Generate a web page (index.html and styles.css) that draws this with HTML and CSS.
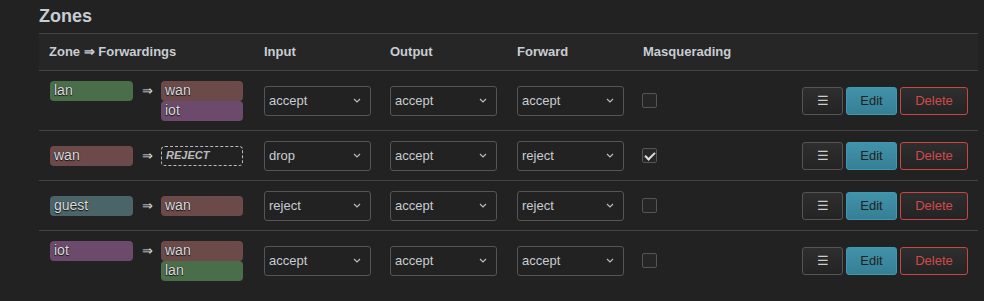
FILE: index.html
```html
<!DOCTYPE html>
<html lang="en">
<head>
  <meta charset="UTF-8">
  <meta name="viewport" content="width=device-width, initial-scale=1.0">
  <title>Firewall - Zones</title>
  <link rel="stylesheet" href="styles.css">
</head>
<body>

  <div class="section">
    <h3>Zones</h3>

    <table class="zones">
      <colgroup>
        <col class="c-zone">
        <col class="c-policy">
        <col class="c-policy2">
        <col class="c-policy">
        <col>
        <col class="c-actions">
      </colgroup>
      <thead>
        <tr>
          <th>Zone &rArr; Forwardings</th>
          <th>Input</th>
          <th>Output</th>
          <th>Forward</th>
          <th>Masquerading</th>
          <th></th>
        </tr>
      </thead>
      <tbody>
        <!-- lan -->
        <tr>
          <td>
            <div class="fwd">
              <span class="zone lan">lan</span>
              <span class="arrow">&rArr;</span>
              <div class="dest">
                <span class="zone wan">wan</span>
                <span class="zone iot">iot</span>
              </div>
            </div>
          </td>
          <td><select><option>accept</option><option>reject</option><option>drop</option></select></td>
          <td><select><option>accept</option><option>reject</option><option>drop</option></select></td>
          <td><select><option>accept</option><option>reject</option><option>drop</option></select></td>
          <td><input type="checkbox"></td>
          <td class="actions">
            <button class="btn">&#9776;</button><button class="btn edit">Edit</button><button class="btn remove">Delete</button>
          </td>
        </tr>

        <!-- wan -->
        <tr>
          <td>
            <div class="fwd">
              <span class="zone wan">wan</span>
              <span class="arrow">&rArr;</span>
              <div class="dest">
                <span class="zone reject">REJECT</span>
              </div>
            </div>
          </td>
          <td><select><option>drop</option><option>accept</option><option>reject</option></select></td>
          <td><select><option>accept</option><option>reject</option><option>drop</option></select></td>
          <td><select><option>reject</option><option>accept</option><option>drop</option></select></td>
          <td><input type="checkbox" checked></td>
          <td class="actions">
            <button class="btn">&#9776;</button><button class="btn edit">Edit</button><button class="btn remove">Delete</button>
          </td>
        </tr>

        <!-- guest -->
        <tr>
          <td>
            <div class="fwd">
              <span class="zone guest">guest</span>
              <span class="arrow">&rArr;</span>
              <div class="dest">
                <span class="zone wan">wan</span>
              </div>
            </div>
          </td>
          <td><select><option>reject</option><option>accept</option><option>drop</option></select></td>
          <td><select><option>accept</option><option>reject</option><option>drop</option></select></td>
          <td><select><option>reject</option><option>accept</option><option>drop</option></select></td>
          <td><input type="checkbox"></td>
          <td class="actions">
            <button class="btn">&#9776;</button><button class="btn edit">Edit</button><button class="btn remove">Delete</button>
          </td>
        </tr>

        <!-- iot -->
        <tr>
          <td>
            <div class="fwd">
              <span class="zone iot">iot</span>
              <span class="arrow">&rArr;</span>
              <div class="dest">
                <span class="zone wan">wan</span>
                <span class="zone lan">lan</span>
              </div>
            </div>
          </td>
          <td><select><option>accept</option><option>reject</option><option>drop</option></select></td>
          <td><select><option>accept</option><option>reject</option><option>drop</option></select></td>
          <td><select><option>accept</option><option>reject</option><option>drop</option></select></td>
          <td><input type="checkbox"></td>
          <td class="actions">
            <button class="btn">&#9776;</button><button class="btn edit">Edit</button><button class="btn remove">Delete</button>
          </td>
        </tr>
      </tbody>
    </table>
  </div>

</body>
</html>
```

FILE: styles.css
```css
body {
  font-family: "Liberation Sans", Arial, sans-serif;
  font-size: 13px;
  margin: 0;
  padding: 0;
  background-color: #222;
  color: #ccc;
}
.section {
  padding: 0 6px 0 39px;
}
h3 {
  margin: 0;
  padding: 6px 0 7px;
  font-size: 18px;
  line-height: 20px;
  color: #c8cdd2;
}
.zones {
  width: 100%;
  border-collapse: collapse;
  table-layout: fixed;
}
.c-zone {
  width: 215px;
}
.c-policy {
  width: 126px;
}
.c-policy2 {
  width: 127px;
}
.c-actions {
  width: 200px;
}
.zones th {
  text-align: left;
  font-weight: bold;
  padding: 10px;
  height: 16px;
  line-height: 16px;
  background-color: #262626;
  border-top: 1px solid #444;
  border-bottom: 1px solid #444;
  color: #c8cdd2;
}
.zones td {
  padding: 9.5px 10px;
  vertical-align: middle;
  border-top: 1px solid #444;
}
.zones tbody tr:first-child td {
  border-top: none;
}
.fwd {
  display: flex;
  align-items: flex-start;
}
.arrow {
  width: 28px;
  text-align: center;
  line-height: 19px;
  color: #ddd;
}
.dest {
  display: flex;
  flex-direction: column;
}
.zone {
  display: block;
  box-sizing: border-box;
  width: 83px;
  height: 20px;
  line-height: 19px;
  padding: 0 4px;
  margin-left: 1px;
  border-radius: 4px;
  font-size: 14px;
  color: #dadcde;
  text-shadow: 0 1px 1px #111, 0 0 1px #222;
}
.dest .zone {
  margin-left: 0;
  width: 82px;
}
.lan {
  background-color: #4a6e4a;
}
.wan {
  background-color: #6d4a4a;
}
.iot {
  background-color: #6c4a6b;
}
.guest {
  background-color: #4b6467;
}
.zone.reject {
  background: none;
  border: 1px dashed #bbb;
  font-size: 11px;
  font-weight: bold;
  font-style: italic;
  line-height: 17px;
  text-shadow: none;
  color: #bbb;
}
select {
  appearance: none;
  width: 107px;
  height: 30px;
  padding: 0 4px;
  font-family: inherit;
  font-size: 13px;
  color: #c8cdd2;
  background: #222 url("data:image/svg+xml,%3Csvg xmlns='http://www.w3.org/2000/svg' width='8' height='5' viewBox='0 0 8 5'%3E%3Cpath d='M1 1l3 3 3-3' fill='none' stroke='%23bbb' stroke-width='1.2'/%3E%3C/svg%3E") no-repeat right 9px center;
  border: 1px solid #555;
  border-radius: 3px;
}
input[type="checkbox"] {
  appearance: none;
  width: 15px;
  height: 15px;
  margin: 0 0 0 -1px;
  display: block;
  background-color: #262626;
  border: 1px solid #555;
  border-radius: 2px;
  position: relative;
}
input[type="checkbox"]:checked::after {
  content: "";
  position: absolute;
  left: 4px;
  top: 1px;
  width: 4px;
  height: 8px;
  border: solid #ddd;
  border-width: 0 2px 2px 0;
  transform: rotate(45deg);
}
.actions {
  text-align: right;
  white-space: nowrap;
}
.btn {
  height: 28px;
  padding: 0 12px;
  margin-left: 3px;
  font-family: inherit;
  font-size: 13px;
  color: #ccc;
  background: linear-gradient(#2e2e2e, #242424);
  border: 1px solid #555;
  border-radius: 3px;
  cursor: pointer;
  width: 41px;
}
.btn.edit {
  width: 51px;
  color: #222;
  background: linear-gradient(#4193aa, #357f95);
  border-color: #3f98b3;
}
.btn.remove {
  width: 68px;
  color: #d04a4a;
  border-color: #c94646;
}
```
